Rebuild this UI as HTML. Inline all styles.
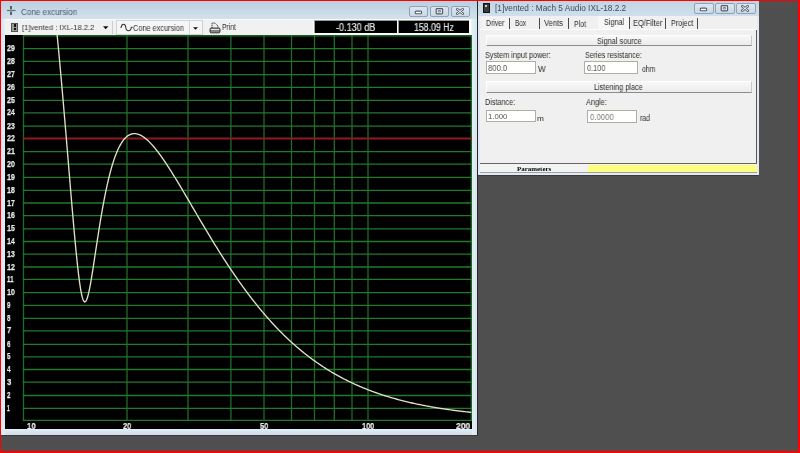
<!DOCTYPE html>
<html><head><meta charset="utf-8">
<style>
html,body{margin:0;padding:0;}
body{width:800px;height:453px;overflow:hidden;position:relative;background:#4f4f4f;font-family:"Liberation Sans",sans-serif;}
.abs{position:absolute;}
.tx{position:absolute;white-space:nowrap;transform-origin:0 0;will-change:transform;}
#redb{position:absolute;left:0;top:0;width:800px;height:453px;box-sizing:border-box;border-left:1px solid #f00;border-top:1px solid #f00;border-right:2px solid #f00;border-bottom:2px solid #f00;z-index:100;}
.wbtn{position:absolute;border:1px solid #8fa3b7;border-radius:2px;background:linear-gradient(#dbe6f0,#cbd9e6);}
</style></head><body>
<!-- left window frame -->
<div class="abs" style="left:1px;top:1px;width:476px;height:434px;background:#d9e7f1;"></div>
<div class="abs" style="left:1px;top:1px;width:476px;height:18px;background:linear-gradient(#c4ccd5 0px,#bcd2e2 2px,#c5d7e6 8px,#d4e1ed 18px);"></div>
<div class="abs" style="left:1px;top:19px;width:4px;height:416px;background:linear-gradient(90deg,#d6e8ee,#e4ecf8);"></div>
<div class="abs" style="left:5px;top:429px;width:467px;height:6px;background:linear-gradient(#e2eef8,#d2e4f0 60%,#dcdce6);"></div>
<div class="abs" style="left:471.5px;top:19px;width:5.5px;height:416px;background:linear-gradient(90deg,#dff0f4,#d8e6f2);"></div>
<div class="abs" style="left:477px;top:1px;width:1px;height:435px;background:#262626;"></div>
<div class="abs" style="left:1px;top:435px;width:477px;height:1px;background:#3a3a3a;"></div>
<svg class="abs" style="left:6px;top:5px" width="11" height="11" viewBox="0 0 11 11"><path d="M1 5.5H9.5" stroke="#6a6a6a" stroke-width="1.2"/><path d="M5 1V4.6M5 6.4V10" stroke="#2e2e2e" stroke-width="1.4"/><rect x="4.3" y="4.8" width="1.4" height="1.4" fill="#9a9a9a"/></svg>
<div class="wbtn" style="left:408.5px;top:6.3px;width:17.0px;height:8.3px;"></div><svg class="abs" style="left:408.5px;top:6.3px" width="19.0" height="10.3" viewBox="0 0 19.0 10.3"><rect x="6.2" y="5.1" width="6.4" height="2.6" rx="1" fill="#fff" stroke="#555e6a" stroke-width="1.1"/></svg>
<div class="wbtn" style="left:429.5px;top:6.3px;width:17.0px;height:8.3px;"></div><svg class="abs" style="left:429.5px;top:6.3px" width="19.0" height="10.3" viewBox="0 0 19.0 10.3"><rect x="6.2" y="2.6" width="6.4" height="5.2" rx="0.8" fill="#e8eef4" stroke="#555e6a" stroke-width="1.2"/><rect x="8.2" y="4.4" width="2.4" height="1.6" rx="0.5" fill="none" stroke="#555e6a" stroke-width="0.8"/></svg>
<div class="wbtn" style="left:451px;top:6.3px;width:16.5px;height:8.3px;"></div><svg class="abs" style="left:451px;top:6.3px" width="18.5" height="10.3" viewBox="0 0 18.5 10.3"><path d="M6.3 3.2L11.7 7.6M11.7 3.2L6.3 7.6" stroke="#555e6a" stroke-width="2.6" stroke-linecap="round"/><path d="M6.3 3.2L11.7 7.6M11.7 3.2L6.3 7.6" stroke="#fff" stroke-width="1" stroke-linecap="round"/></svg>
<!-- toolbar -->
<div class="abs" style="left:5px;top:19px;width:467px;height:15.5px;background:#f1f1f1;border-top:0.5px solid #fbfbfb;"></div>
<div class="abs" style="left:11px;top:22.5px;width:5px;height:7.5px;background:#9a9a9a;border:1px solid #555;"></div>
<div class="abs" style="left:14px;top:24px;width:1.5px;height:3px;background:#111;"></div>
<div class="abs" style="left:14px;top:28px;width:1.5px;height:1.5px;background:#111;"></div>
<svg class="abs" style="left:102.5px;top:25.5px" width="6" height="4"><path d="M0 0.2H5.4L2.7 3.2Z" fill="#111"/></svg>
<div class="abs" style="left:112px;top:21px;width:1px;height:13px;background:#cfcfcf;"></div>
<div class="abs" style="left:116px;top:20px;width:72.5px;height:13px;border:1px solid #d4d4d4;background:#f6f6f6;"></div>
<div class="abs" style="left:188.5px;top:20px;width:12.5px;height:13px;border:1px solid #d4d4d4;background:#f6f6f6;"></div>
<svg class="abs" style="left:120px;top:23px" width="13" height="10" viewBox="0 0 13 10"><path d="M0.3 4.3H1.2C1.8 0.3 5.2 0.3 5.8 4.3C6.2 8.9 10.8 8.9 11.3 4.3H12.7" stroke="#333" fill="none" stroke-width="1.05"/></svg>
<svg class="abs" style="left:192.8px;top:26.5px" width="6" height="4"><path d="M0 0.2H5L2.5 2.8Z" fill="#111"/></svg>
<div class="abs" style="left:202px;top:21px;width:1px;height:13px;background:#cfcfcf;"></div>
<svg class="abs" style="left:208.5px;top:21.5px" width="12" height="12" viewBox="0 0 12 12"><path d="M3 6V1H6L9 4V6" fill="#eee" stroke="#2a2a2a" stroke-width="0.9" stroke-dasharray="1.2 0.6"/><rect x="1.1" y="6.1" width="9.8" height="4.7" rx="1" fill="#e4e4e4" stroke="#1e1e1e" stroke-width="1"/><path d="M1.2 9H10.8" stroke="#222" stroke-width="1"/></svg>
<div class="abs" style="left:313.3px;top:20px;width:158px;height:14.5px;background:#fcfcfc;"></div>
<div class="abs" style="left:313.5px;top:20.2px;width:83.5px;height:13.3px;background:#000;border-top:1px solid #9a9a9a;border-left:1px solid #9a9a9a;box-sizing:border-box;"></div>
<div class="abs" style="left:398px;top:20.2px;width:71px;height:13.3px;background:#000;border-top:1px solid #9a9a9a;border-left:1px solid #9a9a9a;box-sizing:border-box;"></div>
<!-- graph -->
<div class="abs" style="left:5px;top:34.8px;width:466.5px;height:394.4px;background:#000;"></div>
<svg class="abs" style="left:0;top:0" width="800" height="453" viewBox="0 0 800 453">
<defs><clipPath id="gc"><rect x="22.65" y="35.0" width="449.65000000000003" height="386.3"/></clipPath></defs>
<g stroke="#1f6c27" stroke-width="1.3" fill="none">
<line x1="23.50" y1="35.15" x2="23.50" y2="421.05"/>
<line x1="127.00" y1="35.15" x2="127.00" y2="421.05"/>
<line x1="188.00" y1="35.15" x2="188.00" y2="421.05"/>
<line x1="230.90" y1="35.15" x2="230.90" y2="421.05"/>
<line x1="264.00" y1="35.15" x2="264.00" y2="421.05"/>
<line x1="291.50" y1="35.15" x2="291.50" y2="421.05"/>
<line x1="314.50" y1="35.15" x2="314.50" y2="421.05"/>
<line x1="334.30" y1="35.15" x2="334.30" y2="421.05"/>
<line x1="352.00" y1="35.15" x2="352.00" y2="421.05"/>
<line x1="368.00" y1="35.15" x2="368.00" y2="421.05"/>
<line x1="471.30" y1="35.15" x2="471.30" y2="421.05"/>
</g>
<g stroke="#21792a" stroke-width="1.3" fill="none">
<line x1="22.75" y1="420.30" x2="472.05" y2="420.30"/>
<line x1="22.75" y1="408.40" x2="472.05" y2="408.40"/>
<line x1="22.75" y1="395.50" x2="472.05" y2="395.50"/>
<line x1="22.75" y1="382.10" x2="472.05" y2="382.10"/>
<line x1="22.75" y1="369.50" x2="472.05" y2="369.50"/>
<line x1="22.75" y1="356.80" x2="472.05" y2="356.80"/>
<line x1="22.75" y1="344.45" x2="472.05" y2="344.45"/>
<line x1="22.75" y1="330.85" x2="472.05" y2="330.85"/>
<line x1="22.75" y1="318.30" x2="472.05" y2="318.30"/>
<line x1="22.75" y1="305.40" x2="472.05" y2="305.40"/>
<line x1="22.75" y1="292.65" x2="472.05" y2="292.65"/>
<line x1="22.75" y1="279.40" x2="472.05" y2="279.40"/>
<line x1="22.75" y1="267.00" x2="472.05" y2="267.00"/>
<line x1="22.75" y1="254.10" x2="472.05" y2="254.10"/>
<line x1="22.75" y1="241.50" x2="472.05" y2="241.50"/>
<line x1="22.75" y1="228.80" x2="472.05" y2="228.80"/>
<line x1="22.75" y1="215.60" x2="472.05" y2="215.60"/>
<line x1="22.75" y1="203.00" x2="472.05" y2="203.00"/>
<line x1="22.75" y1="190.30" x2="472.05" y2="190.30"/>
<line x1="22.75" y1="177.40" x2="472.05" y2="177.40"/>
<line x1="22.75" y1="164.10" x2="472.05" y2="164.10"/>
<line x1="22.75" y1="151.60" x2="472.05" y2="151.60"/>
<line x1="22.75" y1="126.10" x2="472.05" y2="126.10"/>
<line x1="22.75" y1="112.90" x2="472.05" y2="112.90"/>
<line x1="22.75" y1="100.30" x2="472.05" y2="100.30"/>
<line x1="22.75" y1="87.40" x2="472.05" y2="87.40"/>
<line x1="22.75" y1="74.70" x2="472.05" y2="74.70"/>
<line x1="22.75" y1="61.45" x2="472.05" y2="61.45"/>
<line x1="22.75" y1="48.55" x2="472.05" y2="48.55"/>
<line x1="22.75" y1="35.90" x2="472.05" y2="35.90"/>
</g>
<line x1="22.75" y1="138.5" x2="472.05" y2="138.5" stroke="#8e1a1f" stroke-width="1.8"/>
<path d="M56.70,30.43 L56.80,31.45 L56.90,32.48 L57.00,33.50 L57.10,34.53 L57.20,35.57 L57.30,36.60 L57.40,37.64 L57.50,38.68 L57.60,39.72 L57.70,40.77 L57.80,41.81 L57.90,42.86 L58.00,43.91 L58.10,44.97 L58.20,46.02 L58.30,47.08 L58.40,48.14 L58.50,49.20 L58.60,50.27 L58.70,51.33 L58.80,52.40 L58.90,53.48 L59.00,54.55 L59.10,55.62 L59.20,56.70 L59.30,57.78 L59.40,58.87 L59.50,59.95 L59.60,61.04 L59.70,62.13 L59.80,63.22 L59.90,64.31 L60.00,65.41 L60.10,66.50 L60.20,67.60 L60.30,68.70 L60.40,69.81 L60.50,70.91 L60.60,72.02 L60.70,73.13 L60.80,74.24 L60.90,75.36 L61.00,76.47 L61.10,77.59 L61.20,78.71 L61.30,79.83 L61.40,80.96 L61.50,82.08 L61.60,83.21 L61.70,84.34 L61.80,85.47 L61.90,86.61 L62.00,87.74 L62.10,88.88 L62.20,90.02 L62.30,91.16 L62.40,92.30 L62.50,93.45 L62.60,94.59 L62.70,95.74 L62.80,96.89 L62.90,98.04 L63.00,99.20 L63.10,100.35 L63.20,101.51 L63.30,102.67 L63.40,103.83 L63.50,104.99 L63.60,106.15 L63.70,107.31 L63.80,108.48 L63.90,109.65 L64.00,110.82 L64.10,111.99 L64.20,113.16 L64.30,114.33 L64.40,115.51 L64.50,116.68 L64.60,117.86 L64.70,119.04 L64.80,120.22 L64.90,121.40 L65.00,122.58 L65.10,123.77 L65.20,124.95 L65.30,126.14 L65.40,127.32 L65.50,128.51 L65.60,129.70 L65.70,130.89 L65.80,132.08 L65.90,133.28 L66.00,134.47 L66.10,135.66 L66.20,136.86 L66.30,138.05 L66.40,139.25 L66.50,140.45 L66.60,141.65 L66.70,142.85 L66.80,144.04 L66.90,145.25 L67.00,146.45 L67.10,147.65 L67.20,148.85 L67.30,150.05 L67.40,151.26 L67.50,152.46 L67.60,153.66 L67.70,154.87 L67.80,156.07 L67.90,157.28 L68.00,158.48 L68.10,159.69 L68.20,160.89 L68.30,162.10 L68.40,163.30 L68.50,164.51 L68.60,165.71 L68.70,166.92 L68.80,168.12 L68.90,169.33 L69.00,170.53 L69.10,171.74 L69.20,172.94 L69.30,174.15 L69.40,175.35 L69.50,176.55 L69.60,177.76 L69.70,178.96 L69.80,180.16 L69.90,181.36 L70.00,182.56 L70.10,183.76 L70.20,184.96 L70.30,186.16 L70.40,187.35 L70.50,188.55 L70.60,189.74 L70.70,190.94 L70.80,192.13 L70.90,193.32 L71.00,194.51 L71.10,195.70 L71.20,196.88 L71.30,198.07 L71.40,199.25 L71.50,200.43 L71.60,201.61 L71.70,202.79 L71.80,203.97 L71.90,205.14 L72.00,206.32 L72.10,207.49 L72.20,208.65 L72.30,209.82 L72.40,210.98 L72.50,212.15 L72.60,213.31 L72.70,214.46 L72.80,215.62 L72.90,216.77 L73.00,217.92 L73.10,219.06 L73.20,220.20 L73.30,221.34 L73.40,222.48 L73.50,223.61 L73.60,224.74 L73.70,225.87 L73.80,226.99 L73.90,228.11 L74.00,229.23 L74.10,230.34 L74.20,231.45 L74.30,232.55 L74.40,233.66 L74.50,234.75 L74.60,235.84 L74.70,236.93 L74.80,238.01 L74.90,239.09 L75.00,240.17 L75.10,241.24 L75.20,242.30 L75.30,243.36 L75.40,244.41 L75.50,245.46 L75.60,246.51 L75.70,247.55 L75.80,248.58 L75.90,249.61 L76.00,250.63 L76.10,251.64 L76.20,252.65 L76.30,253.65 L76.40,254.65 L76.60,256.63 L76.80,258.57 L77.00,260.49 L77.20,262.38 L77.40,264.24 L77.60,266.07 L77.80,267.87 L78.00,269.63 L78.20,271.36 L78.40,273.06 L78.60,274.71 L78.80,276.33 L79.00,277.91 L79.20,279.45 L79.40,280.95 L79.60,282.40 L79.80,283.81 L80.00,285.18 L80.20,286.50 L80.40,287.77 L80.60,288.99 L80.80,290.16 L81.00,291.28 L81.20,292.35 L81.40,293.37 L81.70,294.79 L82.00,296.09 L82.30,297.27 L82.60,298.31 L83.00,299.50 L83.40,300.46 L83.90,301.33 L84.70,301.96 L85.70,301.48 L86.30,300.55 L86.80,299.44 L87.20,298.34 L87.60,297.07 L87.90,296.00 L88.20,294.86 L88.50,293.63 L88.80,292.32 L89.10,290.95 L89.40,289.51 L89.60,288.51 L89.80,287.49 L90.00,286.44 L90.20,285.37 L90.40,284.28 L90.60,283.16 L90.80,282.03 L91.00,280.88 L91.20,279.71 L91.40,278.52 L91.60,277.32 L91.80,276.10 L92.00,274.88 L92.20,273.64 L92.40,272.39 L92.60,271.12 L92.80,269.85 L93.00,268.57 L93.20,267.29 L93.40,265.99 L93.60,264.70 L93.80,263.39 L94.00,262.08 L94.20,260.77 L94.40,259.45 L94.60,258.13 L94.80,256.81 L95.00,255.49 L95.20,254.17 L95.40,252.84 L95.60,251.52 L95.80,250.20 L96.00,248.88 L96.20,247.56 L96.40,246.24 L96.60,244.93 L96.80,243.62 L97.00,242.31 L97.20,241.00 L97.40,239.70 L97.60,238.40 L97.80,237.11 L98.00,235.82 L98.20,234.54 L98.40,233.27 L98.60,232.00 L98.80,230.73 L99.00,229.47 L99.20,228.22 L99.40,226.97 L99.60,225.74 L99.80,224.50 L100.00,223.28 L100.20,222.06 L100.40,220.85 L100.60,219.65 L100.80,218.46 L101.00,217.27 L101.20,216.09 L101.40,214.92 L101.60,213.76 L101.80,212.61 L102.00,211.47 L102.20,210.33 L102.40,209.20 L102.60,208.09 L102.80,206.98 L103.00,205.88 L103.20,204.79 L103.40,203.70 L103.60,202.63 L103.80,201.57 L104.00,200.51 L104.20,199.47 L104.40,198.43 L104.60,197.41 L104.80,196.39 L105.00,195.38 L105.20,194.39 L105.40,193.40 L105.70,191.93 L106.00,190.49 L106.30,189.07 L106.60,187.67 L106.90,186.29 L107.20,184.93 L107.50,183.59 L107.80,182.28 L108.10,180.98 L108.40,179.71 L108.70,178.46 L109.00,177.23 L109.30,176.02 L109.60,174.83 L109.90,173.66 L110.20,172.51 L110.50,171.39 L110.80,170.28 L111.10,169.19 L111.40,168.13 L111.70,167.08 L112.00,166.05 L112.30,165.05 L112.60,164.06 L112.90,163.09 L113.30,161.83 L113.70,160.61 L114.10,159.41 L114.50,158.25 L114.90,157.13 L115.30,156.03 L115.70,154.97 L116.10,153.94 L116.50,152.94 L116.90,151.97 L117.30,151.03 L117.80,149.90 L118.30,148.81 L118.80,147.77 L119.30,146.77 L119.80,145.82 L120.30,144.91 L120.80,144.04 L121.40,143.05 L122.00,142.12 L122.60,141.24 L123.20,140.42 L123.90,139.53 L124.60,138.71 L125.30,137.96 L126.10,137.19 L126.90,136.49 L127.70,135.89 L128.60,135.29 L129.50,134.80 L130.50,134.36 L131.50,134.02 L132.50,133.80 L133.50,133.67 L134.50,133.63 L135.50,133.69 L136.50,133.84 L137.50,134.07 L138.50,134.38 L139.50,134.76 L140.50,135.22 L141.40,135.69 L142.30,136.22 L143.20,136.79 L144.10,137.42 L145.00,138.09 L145.80,138.73 L146.60,139.40 L147.40,140.11 L148.20,140.85 L149.00,141.62 L149.80,142.41 L150.50,143.13 L151.20,143.88 L151.90,144.64 L152.60,145.42 L153.30,146.23 L154.00,147.05 L154.70,147.88 L155.40,148.74 L156.10,149.61 L156.80,150.50 L157.50,151.40 L158.20,152.32 L158.90,153.25 L159.50,154.06 L160.10,154.88 L160.70,155.71 L161.30,156.54 L161.90,157.39 L162.50,158.25 L163.10,159.11 L163.70,159.98 L164.30,160.86 L164.90,161.75 L165.50,162.64 L166.10,163.54 L166.70,164.45 L167.30,165.36 L167.90,166.29 L168.50,167.21 L169.10,168.14 L169.70,169.08 L170.30,170.02 L170.90,170.97 L171.50,171.93 L172.10,172.88 L172.70,173.85 L173.30,174.81 L173.90,175.78 L174.50,176.76 L175.10,177.74 L175.70,178.72 L176.30,179.70 L176.90,180.69 L177.50,181.68 L178.10,182.68 L178.70,183.68 L179.30,184.68 L179.90,185.68 L180.50,186.68 L181.10,187.69 L181.70,188.70 L182.30,189.71 L182.90,190.72 L183.50,191.74 L184.10,192.76 L184.70,193.77 L185.30,194.79 L185.90,195.81 L186.50,196.83 L187.10,197.85 L187.70,198.88 L188.30,199.90 L188.90,200.93 L189.50,201.95 L190.10,202.97 L190.70,204.00 L191.30,205.03 L191.90,206.05 L192.50,207.08 L193.10,208.10 L193.70,209.13 L194.30,210.15 L194.90,211.18 L195.50,212.20 L196.10,213.22 L196.70,214.25 L197.30,215.27 L197.90,216.29 L198.50,217.31 L199.10,218.33 L199.70,219.35 L200.30,220.37 L200.90,221.38 L201.50,222.40 L202.10,223.41 L202.70,224.42 L203.30,225.44 L203.90,226.45 L204.50,227.45 L205.10,228.46 L205.70,229.47 L206.30,230.47 L206.90,231.47 L207.50,232.47 L208.10,233.47 L208.70,234.46 L209.30,235.46 L209.90,236.45 L210.50,237.44 L211.10,238.43 L211.70,239.41 L212.30,240.39 L212.90,241.37 L213.50,242.35 L214.10,243.33 L214.70,244.30 L215.30,245.28 L215.90,246.24 L216.50,247.21 L217.10,248.17 L217.70,249.14 L218.30,250.09 L218.90,251.05 L219.50,252.00 L220.10,252.95 L220.70,253.90 L221.30,254.85 L221.90,255.79 L222.50,256.73 L223.10,257.66 L223.70,258.60 L224.30,259.53 L224.90,260.46 L225.50,261.38 L226.10,262.30 L226.70,263.22 L227.30,264.14 L227.90,265.05 L228.50,265.96 L229.10,266.87 L229.70,267.77 L230.30,268.67 L230.90,269.56 L231.50,270.46 L232.10,271.35 L232.70,272.24 L233.30,273.12 L233.90,274.00 L234.50,274.88 L235.10,275.75 L235.70,276.62 L236.30,277.49 L236.90,278.35 L237.50,279.21 L238.10,280.07 L238.70,280.92 L239.30,281.77 L239.90,282.62 L240.50,283.46 L241.10,284.30 L241.70,285.14 L242.30,285.97 L242.90,286.80 L243.50,287.63 L244.10,288.45 L244.70,289.27 L245.30,290.08 L245.90,290.89 L246.50,291.70 L247.10,292.51 L247.70,293.31 L248.40,294.24 L249.10,295.16 L249.80,296.08 L250.50,297.00 L251.20,297.91 L251.90,298.82 L252.60,299.72 L253.30,300.61 L254.00,301.51 L254.70,302.39 L255.40,303.27 L256.10,304.15 L256.80,305.02 L257.50,305.89 L258.20,306.75 L258.90,307.61 L259.60,308.46 L260.30,309.31 L261.00,310.15 L261.70,310.99 L262.40,311.82 L263.10,312.65 L263.80,313.47 L264.50,314.29 L265.20,315.10 L265.90,315.91 L266.60,316.72 L267.30,317.51 L268.00,318.31 L268.70,319.10 L269.40,319.88 L270.10,320.66 L270.80,321.44 L271.50,322.21 L272.20,322.97 L272.90,323.73 L273.60,324.49 L274.30,325.24 L275.00,325.98 L275.70,326.73 L276.40,327.46 L277.10,328.19 L277.80,328.92 L278.50,329.64 L279.20,330.36 L280.00,331.18 L280.80,331.99 L281.60,332.79 L282.40,333.59 L283.20,334.38 L284.00,335.16 L284.80,335.94 L285.60,336.71 L286.40,337.48 L287.20,338.24 L288.00,339.00 L288.80,339.74 L289.60,340.49 L290.40,341.23 L291.20,341.96 L292.00,342.68 L292.80,343.40 L293.60,344.12 L294.40,344.83 L295.20,345.53 L296.00,346.23 L296.80,346.92 L297.60,347.61 L298.40,348.29 L299.20,348.97 L300.00,349.64 L300.80,350.30 L301.60,350.96 L302.40,351.62 L303.20,352.26 L304.00,352.91 L304.80,353.55 L305.60,354.18 L306.40,354.81 L307.20,355.43 L308.00,356.04 L308.80,356.66 L309.60,357.26 L310.40,357.87 L311.30,358.54 L312.20,359.20 L313.10,359.86 L314.00,360.51 L314.90,361.16 L315.80,361.80 L316.70,362.43 L317.60,363.06 L318.50,363.68 L319.40,364.29 L320.30,364.90 L321.20,365.51 L322.10,366.10 L323.00,366.69 L323.90,367.28 L324.80,367.86 L325.70,368.43 L326.60,369.00 L327.50,369.56 L328.40,370.12 L329.30,370.67 L330.20,371.22 L331.10,371.76 L332.00,372.30 L332.90,372.82 L333.80,373.35 L334.70,373.87 L335.60,374.38 L336.50,374.89 L337.40,375.39 L338.30,375.89 L339.20,376.39 L340.10,376.87 L341.00,377.36 L341.90,377.84 L342.80,378.31 L343.70,378.78 L344.60,379.24 L345.50,379.70 L346.40,380.16 L347.30,380.61 L348.20,381.05 L349.10,381.49 L350.10,381.97 L351.10,382.45 L352.10,382.92 L353.10,383.39 L354.10,383.85 L355.10,384.31 L356.10,384.76 L357.10,385.21 L358.10,385.65 L359.10,386.08 L360.10,386.51 L361.10,386.94 L362.10,387.36 L363.10,387.77 L364.10,388.18 L365.10,388.59 L366.10,388.99 L367.10,389.38 L368.10,389.77 L369.10,390.16 L370.10,390.54 L371.10,390.92 L372.10,391.29 L373.10,391.66 L374.10,392.02 L375.10,392.38 L376.10,392.74 L377.10,393.09 L378.10,393.43 L379.10,393.78 L380.10,394.11 L381.10,394.45 L382.10,394.78 L383.10,395.10 L384.10,395.43 L385.10,395.74 L386.10,396.06 L387.10,396.37 L388.10,396.67 L389.10,396.98 L390.10,397.28 L391.10,397.57 L392.10,397.86 L393.10,398.15 L394.10,398.44 L395.10,398.72 L396.10,398.99 L397.10,399.27 L398.10,399.54 L399.10,399.81 L400.10,400.07 L401.10,400.33 L402.10,400.59 L403.10,400.84 L404.10,401.10 L405.10,401.34 L406.10,401.59 L407.10,401.83 L408.10,402.07 L409.10,402.31 L410.10,402.54 L411.10,402.77 L412.10,403.00 L413.10,403.22 L414.10,403.44 L415.10,403.66 L416.10,403.88 L417.10,404.09 L418.10,404.30 L419.10,404.51 L420.10,404.71 L421.10,404.92 L422.10,405.12 L423.10,405.32 L424.10,405.51 L425.10,405.70 L426.10,405.89 L427.10,406.08 L428.10,406.27 L429.10,406.45 L430.10,406.63 L431.10,406.81 L432.10,406.99 L433.10,407.16 L434.10,407.33 L435.10,407.50 L436.10,407.67 L437.10,407.83 L438.10,408.00 L439.10,408.16 L440.10,408.32 L441.10,408.47 L442.10,408.63 L443.10,408.78 L444.10,408.93 L445.10,409.08 L446.10,409.23 L447.10,409.38 L448.10,409.52 L449.10,409.66 L450.10,409.80 L451.10,409.94 L452.10,410.08 L453.10,410.21 L454.10,410.34 L455.10,410.47 L456.10,410.60 L457.10,410.73 L458.10,410.86 L459.10,410.98 L460.10,411.10 L461.10,411.23 L462.10,411.35 L463.10,411.46 L464.10,411.58 L465.10,411.70 L466.10,411.81 L467.10,411.92 L468.10,412.03 L469.10,412.14 L470.10,412.25 L471.10,412.36 L471.30,412.38" stroke="#e0e0c4" stroke-width="1.35" fill="none" clip-path="url(#gc)"/>
</svg>
<!-- right window -->
<div class="abs" style="left:478px;top:1px;width:281px;height:174px;background:#e2ebf3;"></div>
<div class="abs" style="left:478px;top:1px;width:281px;height:15px;background:linear-gradient(#c8d1da 0px,#c4d6e4 2px,#d0dfeb 15px);"></div>
<div class="abs" style="left:478px;top:175px;width:281px;height:1px;background:#3a3a3a;"></div>
<div class="abs" style="left:483px;top:3px;width:5px;height:8px;background:#3a3a3a;border:0.5px solid #111;"></div>
<div class="abs" style="left:485px;top:5px;width:2px;height:2px;background:#ccc;"></div>
<div class="wbtn" style="left:694px;top:3px;width:17.5px;height:8.5px;"></div><svg class="abs" style="left:694px;top:3px" width="19.5" height="10.5" viewBox="0 0 19.5 10.5"><rect x="6.2" y="5.1" width="6.4" height="2.6" rx="1" fill="#fff" stroke="#555e6a" stroke-width="1.1"/></svg>
<div class="wbtn" style="left:715px;top:3px;width:17.5px;height:8.5px;"></div><svg class="abs" style="left:715px;top:3px" width="19.5" height="10.5" viewBox="0 0 19.5 10.5"><rect x="6.2" y="2.6" width="6.4" height="5.2" rx="0.8" fill="#e8eef4" stroke="#555e6a" stroke-width="1.2"/><rect x="8.2" y="4.4" width="2.4" height="1.6" rx="0.5" fill="none" stroke="#555e6a" stroke-width="0.8"/></svg>
<div class="wbtn" style="left:736px;top:3px;width:17.5px;height:8.5px;"></div><svg class="abs" style="left:736px;top:3px" width="19.5" height="10.5" viewBox="0 0 19.5 10.5"><path d="M6.3 3.2L11.7 7.6M11.7 3.2L6.3 7.6" stroke="#555e6a" stroke-width="2.6" stroke-linecap="round"/><path d="M6.3 3.2L11.7 7.6M11.7 3.2L6.3 7.6" stroke="#fff" stroke-width="1" stroke-linecap="round"/></svg>
<div class="abs" style="left:480px;top:16px;width:277px;height:13px;background:#f0f0f0;"></div>
<div class="abs" style="left:482px;top:17px;width:27px;height:12px;background:#f3f3f3;"></div>
<div class="abs" style="left:598px;top:15.5px;width:31px;height:14px;background:#f7f7f7;"></div>
<div class="abs" style="left:509px;top:17.5px;width:1.2px;height:11px;background:#4a4a4a;"></div>
<div class="abs" style="left:538.5px;top:17.5px;width:1.2px;height:11px;background:#4a4a4a;"></div>
<div class="abs" style="left:568px;top:17.5px;width:1.2px;height:11px;background:#4a4a4a;"></div>
<div class="abs" style="left:629px;top:16.5px;width:1.2px;height:13px;background:#4a4a4a;"></div>
<div class="abs" style="left:665px;top:17.5px;width:1.2px;height:11px;background:#4a4a4a;"></div>
<div class="abs" style="left:697px;top:17.5px;width:1.2px;height:11px;background:#4a4a4a;"></div>
<div class="abs" style="left:480px;top:29px;width:276.5px;height:134.3px;background:#f0f0f0;border-top:1px solid #fcfcfc;box-sizing:border-box;"></div>
<div class="abs" style="left:756.3px;top:30px;width:1px;height:134px;background:#555;"></div>
<div class="abs" style="left:480px;top:163px;width:277px;height:1px;background:#666;"></div>
<div class="abs" style="left:485.5px;top:35.3px;width:266px;height:10.7px;background:linear-gradient(#f8f8f8,#ececec);border-top:1px solid #fff;border-left:1px solid #fff;border-right:1px solid #c8c8c8;border-bottom:1px solid #8c8c8c;box-sizing:border-box;"></div>
<div class="abs" style="left:485.5px;top:80.5px;width:266px;height:12px;background:linear-gradient(#f8f8f8,#ececec);border-top:1px solid #fff;border-left:1px solid #fff;border-right:1px solid #c8c8c8;border-bottom:1px solid #8c8c8c;box-sizing:border-box;"></div>
<div class="abs" style="left:486px;top:60.5px;width:49.5px;height:13px;background:#fff;border:1px solid #b4aca0;box-sizing:border-box;"></div>
<div class="abs" style="left:584px;top:60.5px;width:53.8px;height:13.3px;background:#fff;border:1px solid #b4aca0;box-sizing:border-box;"></div>
<div class="abs" style="left:486px;top:110.2px;width:49.7px;height:12.1px;background:#fff;border:1px solid #b4aca0;box-sizing:border-box;"></div>
<div class="abs" style="left:587.2px;top:109.5px;width:49.6px;height:13px;background:#fff;border:1px solid #b4aca0;box-sizing:border-box;"></div>
<div class="abs" style="left:480px;top:164px;width:277px;height:8.5px;background:#f3f3f3;border-bottom:1px solid #a0a0a0;box-sizing:border-box;"></div>
<div class="abs" style="left:588px;top:164.6px;width:168.5px;height:7px;background:#fdfd80;"></div>
<div class="tx" style="left:20.70px;top:6.70px;font-size:8.75px;line-height:11px;font-weight:normal;color:#4a5a6c;transform:scaleX(0.925);">Cone excursion</div>
<div class="tx" style="left:22.25px;top:23.00px;font-size:8.0px;line-height:10px;font-weight:normal;color:#333;transform:scaleX(0.945);">[1]vented : IXL-18.2.2</div>
<div class="tx" style="left:133.00px;top:22.70px;font-size:8.75px;line-height:11px;font-weight:normal;color:#333;transform:scaleX(0.839);">Cone excursion</div>
<div class="tx" style="left:221.80px;top:22.10px;font-size:8.75px;line-height:11px;font-weight:normal;color:#333;transform:scaleX(0.778);">Print</div>
<div class="tx" style="left:336.10px;top:20.80px;font-size:10.0px;line-height:13px;font-weight:normal;color:#e6e6e6;transform:scaleX(0.905);-webkit-text-stroke:0.2px #e6e6e6;">-0.130 dB</div>
<div class="tx" style="left:414.40px;top:21.00px;font-size:10.0px;line-height:13px;font-weight:normal;color:#e6e6e6;transform:scaleX(0.876);-webkit-text-stroke:0.2px #e6e6e6;">158.09 Hz</div>
<div class="tx" style="left:495.40px;top:2.90px;font-size:8.25px;line-height:11px;font-weight:normal;color:#3c4c62;transform:scaleX(0.997);">[1]vented : Mach 5 Audio IXL-18.2.2</div>
<div class="tx" style="left:485.60px;top:18.40px;font-size:8.5px;line-height:11px;font-weight:normal;color:#2c2c2c;transform:scaleX(0.817);">Driver</div>
<div class="tx" style="left:514.90px;top:18.40px;font-size:8.5px;line-height:11px;font-weight:normal;color:#2c2c2c;transform:scaleX(0.747);">Box</div>
<div class="tx" style="left:544.25px;top:18.40px;font-size:8.5px;line-height:11px;font-weight:normal;color:#2c2c2c;transform:scaleX(0.893);">Vents</div>
<div class="tx" style="left:574.00px;top:18.60px;font-size:8.5px;line-height:11px;font-weight:normal;color:#2c2c2c;transform:scaleX(0.820);">Plot</div>
<div class="tx" style="left:603.50px;top:17.30px;font-size:8.5px;line-height:11px;font-weight:normal;color:#2c2c2c;transform:scaleX(0.854);">Signal</div>
<div class="tx" style="left:632.60px;top:18.40px;font-size:8.5px;line-height:11px;font-weight:normal;color:#2c2c2c;transform:scaleX(0.876);">EQ/Filter</div>
<div class="tx" style="left:670.80px;top:18.40px;font-size:8.5px;line-height:11px;font-weight:normal;color:#2c2c2c;transform:scaleX(0.844);">Project</div>
<div class="tx" style="left:596.60px;top:36.40px;font-size:8.5px;line-height:11px;font-weight:normal;color:#2c2c2c;transform:scaleX(0.867);">Signal source</div>
<div class="tx" style="left:485.00px;top:49.60px;font-size:8.25px;line-height:11px;font-weight:normal;color:#2c2c2c;transform:scaleX(0.880);">System input power:</div>
<div class="tx" style="left:585.00px;top:49.60px;font-size:8.25px;line-height:11px;font-weight:normal;color:#2c2c2c;transform:scaleX(0.866);">Series resistance:</div>
<div class="tx" style="left:488.00px;top:62.50px;font-size:8.5px;line-height:11px;font-weight:normal;color:#555;transform:scaleX(0.905);">800.0</div>
<div class="tx" style="left:538.00px;top:63.50px;font-size:8.5px;line-height:11px;font-weight:normal;color:#2c2c2c;transform:scaleX(0.938);">W</div>
<div class="tx" style="left:586.80px;top:62.50px;font-size:8.5px;line-height:11px;font-weight:normal;color:#555;transform:scaleX(0.867);">0.100</div>
<div class="tx" style="left:641.80px;top:63.80px;font-size:8.25px;line-height:11px;font-weight:normal;color:#2c2c2c;transform:scaleX(0.825);">ohm</div>
<div class="tx" style="left:594.00px;top:82.20px;font-size:8.5px;line-height:11px;font-weight:normal;color:#2c2c2c;transform:scaleX(0.860);">Listening place</div>
<div class="tx" style="left:485.00px;top:96.70px;font-size:8.75px;line-height:11px;font-weight:normal;color:#2c2c2c;transform:scaleX(0.825);">Distance:</div>
<div class="tx" style="left:585.50px;top:97.00px;font-size:8.5px;line-height:11px;font-weight:normal;color:#2c2c2c;transform:scaleX(0.863);">Angle:</div>
<div class="tx" style="left:488.30px;top:112.00px;font-size:7.75px;line-height:10px;font-weight:normal;color:#555;transform:scaleX(0.984);">1.000</div>
<div class="tx" style="left:537.40px;top:113.60px;font-size:7.5px;line-height:10px;font-weight:normal;color:#2c2c2c;transform:scaleX(1.100);">m</div>
<div class="tx" style="left:589.50px;top:110.50px;font-size:9.25px;line-height:12px;font-weight:normal;color:#7c7c7c;transform:scaleX(0.839);">0.0000</div>
<div class="tx" style="left:639.80px;top:112.50px;font-size:8.5px;line-height:11px;font-weight:normal;color:#2c2c2c;transform:scaleX(0.808);">rad</div>
<div class="tx" style="left:516.90px;top:165.25px;font-size:6.25px;line-height:8px;font-weight:bold;color:#000;transform:scaleX(1.108);font-family:'Liberation Serif',serif;">Parameters</div>
<div class="tx" style="left:6.90px;top:400.90px;font-size:9.75px;line-height:13px;font-weight:bold;color:#ececec;transform:scaleX(0.483);-webkit-text-stroke:0.25px #ececec;">1</div>
<div class="tx" style="left:6.90px;top:388.00px;font-size:9.75px;line-height:13px;font-weight:bold;color:#ececec;transform:scaleX(0.658);-webkit-text-stroke:0.25px #ececec;">2</div>
<div class="tx" style="left:6.90px;top:374.60px;font-size:9.75px;line-height:13px;font-weight:bold;color:#ececec;transform:scaleX(0.790);-webkit-text-stroke:0.25px #ececec;">3</div>
<div class="tx" style="left:6.90px;top:362.00px;font-size:9.75px;line-height:13px;font-weight:bold;color:#ececec;transform:scaleX(0.658);-webkit-text-stroke:0.25px #ececec;">4</div>
<div class="tx" style="left:6.90px;top:349.30px;font-size:9.75px;line-height:13px;font-weight:bold;color:#ececec;transform:scaleX(0.658);-webkit-text-stroke:0.25px #ececec;">5</div>
<div class="tx" style="left:6.90px;top:336.95px;font-size:9.75px;line-height:13px;font-weight:bold;color:#ececec;transform:scaleX(0.658);-webkit-text-stroke:0.25px #ececec;">6</div>
<div class="tx" style="left:6.90px;top:323.35px;font-size:9.75px;line-height:13px;font-weight:bold;color:#ececec;transform:scaleX(0.790);-webkit-text-stroke:0.25px #ececec;">7</div>
<div class="tx" style="left:6.90px;top:310.80px;font-size:9.75px;line-height:13px;font-weight:bold;color:#ececec;transform:scaleX(0.658);-webkit-text-stroke:0.25px #ececec;">8</div>
<div class="tx" style="left:6.90px;top:297.90px;font-size:9.75px;line-height:13px;font-weight:bold;color:#ececec;transform:scaleX(0.658);-webkit-text-stroke:0.25px #ececec;">9</div>
<div class="tx" style="left:6.90px;top:285.15px;font-size:9.75px;line-height:13px;font-weight:bold;color:#ececec;transform:scaleX(0.718);-webkit-text-stroke:0.25px #ececec;">10</div>
<div class="tx" style="left:6.90px;top:271.90px;font-size:9.75px;line-height:13px;font-weight:bold;color:#ececec;transform:scaleX(0.627);-webkit-text-stroke:0.25px #ececec;">11</div>
<div class="tx" style="left:6.90px;top:259.50px;font-size:9.75px;line-height:13px;font-weight:bold;color:#ececec;transform:scaleX(0.718);-webkit-text-stroke:0.25px #ececec;">12</div>
<div class="tx" style="left:6.90px;top:246.60px;font-size:9.75px;line-height:13px;font-weight:bold;color:#ececec;transform:scaleX(0.718);-webkit-text-stroke:0.25px #ececec;">13</div>
<div class="tx" style="left:6.90px;top:234.00px;font-size:9.75px;line-height:13px;font-weight:bold;color:#ececec;transform:scaleX(0.718);-webkit-text-stroke:0.25px #ececec;">14</div>
<div class="tx" style="left:6.90px;top:221.30px;font-size:9.75px;line-height:13px;font-weight:bold;color:#ececec;transform:scaleX(0.718);-webkit-text-stroke:0.25px #ececec;">15</div>
<div class="tx" style="left:6.90px;top:208.10px;font-size:9.75px;line-height:13px;font-weight:bold;color:#ececec;transform:scaleX(0.718);-webkit-text-stroke:0.25px #ececec;">16</div>
<div class="tx" style="left:6.90px;top:195.50px;font-size:9.75px;line-height:13px;font-weight:bold;color:#ececec;transform:scaleX(0.718);-webkit-text-stroke:0.25px #ececec;">17</div>
<div class="tx" style="left:6.90px;top:182.80px;font-size:9.75px;line-height:13px;font-weight:bold;color:#ececec;transform:scaleX(0.718);-webkit-text-stroke:0.25px #ececec;">18</div>
<div class="tx" style="left:6.90px;top:169.90px;font-size:9.75px;line-height:13px;font-weight:bold;color:#ececec;transform:scaleX(0.718);-webkit-text-stroke:0.25px #ececec;">19</div>
<div class="tx" style="left:6.90px;top:156.60px;font-size:9.75px;line-height:13px;font-weight:bold;color:#ececec;transform:scaleX(0.718);-webkit-text-stroke:0.25px #ececec;">20</div>
<div class="tx" style="left:6.90px;top:144.10px;font-size:9.75px;line-height:13px;font-weight:bold;color:#ececec;transform:scaleX(0.718);-webkit-text-stroke:0.25px #ececec;">21</div>
<div class="tx" style="left:6.90px;top:131.00px;font-size:9.75px;line-height:13px;font-weight:bold;color:#ececec;transform:scaleX(0.718);-webkit-text-stroke:0.25px #ececec;">22</div>
<div class="tx" style="left:6.90px;top:118.60px;font-size:9.75px;line-height:13px;font-weight:bold;color:#ececec;transform:scaleX(0.718);-webkit-text-stroke:0.25px #ececec;">23</div>
<div class="tx" style="left:6.90px;top:105.40px;font-size:9.75px;line-height:13px;font-weight:bold;color:#ececec;transform:scaleX(0.718);-webkit-text-stroke:0.25px #ececec;">24</div>
<div class="tx" style="left:6.90px;top:92.80px;font-size:9.75px;line-height:13px;font-weight:bold;color:#ececec;transform:scaleX(0.718);-webkit-text-stroke:0.25px #ececec;">25</div>
<div class="tx" style="left:6.90px;top:79.90px;font-size:9.75px;line-height:13px;font-weight:bold;color:#ececec;transform:scaleX(0.718);-webkit-text-stroke:0.25px #ececec;">26</div>
<div class="tx" style="left:6.90px;top:67.20px;font-size:9.75px;line-height:13px;font-weight:bold;color:#ececec;transform:scaleX(0.718);-webkit-text-stroke:0.25px #ececec;">27</div>
<div class="tx" style="left:6.90px;top:53.95px;font-size:9.75px;line-height:13px;font-weight:bold;color:#ececec;transform:scaleX(0.718);-webkit-text-stroke:0.25px #ececec;">28</div>
<div class="tx" style="left:6.90px;top:41.05px;font-size:9.75px;line-height:13px;font-weight:bold;color:#ececec;transform:scaleX(0.718);-webkit-text-stroke:0.25px #ececec;">29</div>
<div class="tx" style="left:27.00px;top:418.80px;font-size:9.75px;line-height:13px;font-weight:bold;color:#ececec;transform:scaleX(0.800);-webkit-text-stroke:0.25px #ececec;">10</div>
<div class="tx" style="left:122.75px;top:418.80px;font-size:9.75px;line-height:13px;font-weight:bold;color:#ececec;transform:scaleX(0.750);-webkit-text-stroke:0.25px #ececec;">20</div>
<div class="tx" style="left:259.75px;top:418.80px;font-size:9.75px;line-height:13px;font-weight:bold;color:#ececec;transform:scaleX(0.750);-webkit-text-stroke:0.25px #ececec;">50</div>
<div class="tx" style="left:361.90px;top:418.80px;font-size:9.75px;line-height:13px;font-weight:bold;color:#ececec;transform:scaleX(0.756);-webkit-text-stroke:0.25px #ececec;">100</div>
<div class="tx" style="left:455.60px;top:418.80px;font-size:9.75px;line-height:13px;font-weight:bold;color:#ececec;transform:scaleX(0.881);-webkit-text-stroke:0.25px #ececec;">200</div>
<div id="redb"></div>
</body></html>
